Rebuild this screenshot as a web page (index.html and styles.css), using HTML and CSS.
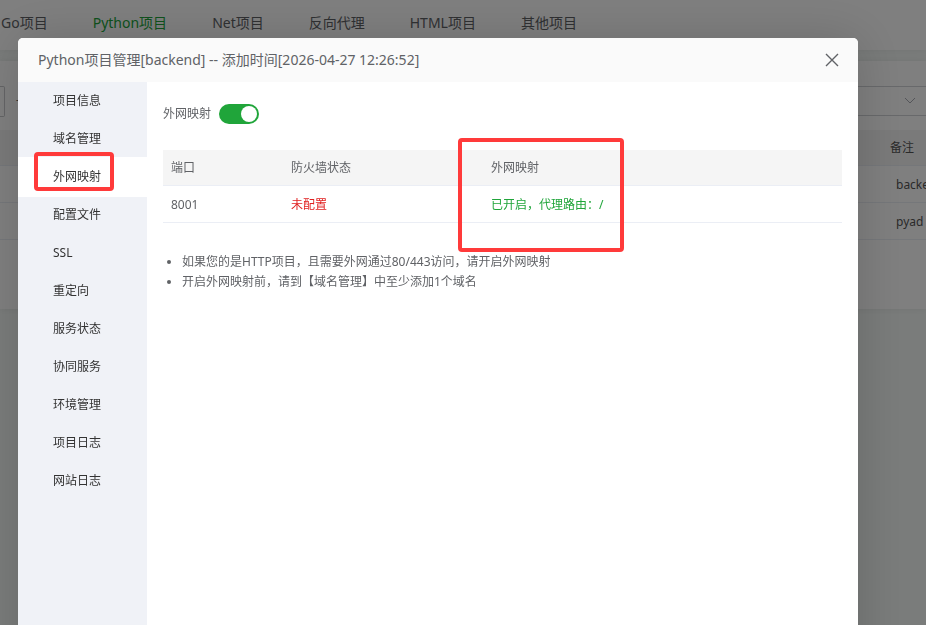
FILE: index.html
```html
<!DOCTYPE html>
<html lang="zh-CN">
<head>
<meta charset="utf-8">
<title>Python项目管理</title>
<link rel="stylesheet" href="styles.css">
</head>
<body>
<div class="page">
  <nav class="tabs">
    <a href="#">Go项目</a>
    <a href="#" class="current">Python项目</a>
    <a href="#">Net项目</a>
    <a href="#">反向代理</a>
    <a href="#">HTML项目</a>
    <a href="#">其他项目</a>
  </nav>
  <main class="card">
    <div class="toolbar">
      <button class="tool" type="button" aria-label="操作"></button>
      <span class="dash">-</span>
      <button class="picker" type="button" aria-label="选择分类">
        <svg width="12" height="8" viewBox="0 0 12 8"><path d="M1 1l5 5 5-5"/></svg>
      </button>
    </div>
    <table class="projects">
      <thead><tr><th>备注</th></tr></thead>
      <tbody>
        <tr><td>backend</td></tr>
        <tr><td>pyad</td></tr>
      </tbody>
    </table>
  </main>
</div>

<div class="overlay">
  <section class="modal" role="dialog" aria-labelledby="dialog-title">
    <header class="modal-head">
      <h1 id="dialog-title">Python项目管理[backend] -- 添加时间[2026-04-27 12:26:52]</h1>
      <button class="close" type="button" aria-label="关闭">
        <svg width="14" height="14" viewBox="0 0 14 14"><path d="M1 1l12 12M13 1L1 13"/></svg>
      </button>
    </header>
    <div class="modal-body">
      <nav class="menu">
        <a href="#">项目信息</a>
        <a href="#">域名管理</a>
        <a href="#" class="active">外网映射<span class="mark mark-menu"></span></a>
        <a href="#">配置文件</a>
        <a href="#">SSL</a>
        <a href="#">重定向</a>
        <a href="#">服务状态</a>
        <a href="#">协同服务</a>
        <a href="#">环境管理</a>
        <a href="#">项目日志</a>
        <a href="#">网站日志</a>
      </nav>
      <div class="content">
        <div class="field">
          <label for="mapping">外网映射</label>
          <input class="switch" type="checkbox" id="mapping" checked>
        </div>
        <div class="table-wrap">
          <table class="ports">
            <colgroup><col class="col-port"><col class="col-wall"><col></colgroup>
            <thead><tr><th>端口</th><th>防火墙状态</th><th>外网映射</th></tr></thead>
            <tbody><tr><td>8001</td><td class="red">未配置</td><td class="green">已开启，代理路由：/</td></tr></tbody>
          </table>
          <span class="mark mark-table"></span>
        </div>
        <ul class="tips">
          <li>如果您的是HTTP项目，且需要外网通过80/443访问，请开启外网映射</li>
          <li>开启外网映射前，请到【域名管理】中至少添加1个域名</li>
        </ul>
      </div>
    </div>
  </section>
</div>
</body>
</html>
```

FILE: styles.css
```css
* { box-sizing: border-box; }

body {
  margin: 0;
  height: 100vh;
  overflow: hidden;
  background: #f5f9f7;
  color: #606266;
  font: 12px/20px "Noto Sans", "Noto Sans CJK SC", sans-serif;
}

a { color: inherit; text-decoration: none; }
button { padding: 0; border: 0; background: none; }
svg { display: block; fill: none; stroke: currentColor; }
table { width: 100%; border-collapse: separate; border-spacing: 0; table-layout: fixed; }
th, td { text-align: left; font-weight: 400; border-bottom: 1px solid #ebeef5; }

.tabs {
  display: flex;
  gap: 45px;
  height: 50px;
  padding-left: 1px;
  line-height: 46px;
  font-size: 14px;
  background: #fff;
  box-shadow: 0 0 8px rgba(0, 0, 0, .08);
}
.tabs .current { color: #20a53a; }

.card {
  height: 248px;
  margin-top: 11px;
  background: #fff;
  box-shadow: 0 0 8px rgba(0, 0, 0, .08);
}
.toolbar { display: flex; gap: 11px; padding: 25px 0 13px; }
.tool { width: 5px; height: 31px; border: 1px solid #c8c9cc; border-left: 0; border-radius: 0 2px 2px 0; }
.dash { line-height: 28px; }
.picker {
  display: flex;
  flex: 1;
  justify-content: flex-end;
  align-items: center;
  height: 30px;
  margin-left: 60px;
  padding-right: 10px;
  border: 1px solid #d0d2d6;
  border-right: 0;
  color: #a8abb2;
}
.projects { color: #555; }
.projects th { height: 36px; padding: 0 0 0 calc(100% - 36px); background: #f5f5f5; }
.projects td { height: 37px; padding: 2px 0 0 calc(100% - 30px); white-space: nowrap; }

.overlay {
  position: fixed;
  inset: 0;
  display: flex;
  padding: 38px 68px 0 18px;
  background: rgba(0, 0, 0, .5);
}
.modal {
  display: flex;
  flex: 1;
  flex-direction: column;
  margin-bottom: -60px;
  border-radius: 5px 5px 0 0;
  background: #fff;
  box-shadow: 1px 1px 50px rgba(0, 0, 0, .16);
}
.modal-head {
  display: flex;
  justify-content: space-between;
  align-items: center;
  height: 44px;
  padding: 0 19px 0 20px;
  border-radius: 5px 5px 0 0;
  background: #fafafa;
}
.modal-head h1 { margin: 0; font-size: 14px; font-weight: 400; }
.close { color: #606266; stroke-width: 1.4; }
.modal-body { display: flex; flex: 1; }

.menu { width: 129px; background: #f0f2f7; color: #333; }
.menu a { position: relative; display: block; padding-left: 35px; line-height: 38px; }
.menu .active { background: #fff; box-shadow: 0 -1px #fff, 0 1px #fff; z-index: 1; }

.content { flex: 1; padding: 22px 16px; }
.field { display: flex; align-items: center; gap: 8px; margin-bottom: 26px; }
.switch {
  display: flex;
  justify-content: flex-end;
  appearance: none;
  width: 40px;
  height: 20px;
  margin: 0;
  padding: 2px;
  border-radius: 10px;
  background: #20a53a;
}
.switch::before { content: ""; width: 16px; height: 16px; border-radius: 50%; background: #fff; }

.table-wrap { position: relative; }
.col-port { width: 120px; }
.col-wall { width: 200px; }
.ports th { height: 36px; padding: 0 8px; background: #f5f5f5; }
.ports td { height: 37px; padding: 2px 8px 0; }
.ports .red { color: #e02020; }
.ports .green { color: #20a53a; }

.tips { margin: 29px 0 0; padding-left: 19px; }

.mark { position: absolute; border: 4px solid #ff3a3a; border-radius: 4px; pointer-events: none; }
.mark-menu { top: -6px; left: 16px; width: 80px; height: 39px; }
.mark-table { top: -12px; left: 295px; width: 166px; height: 114px; }
```
